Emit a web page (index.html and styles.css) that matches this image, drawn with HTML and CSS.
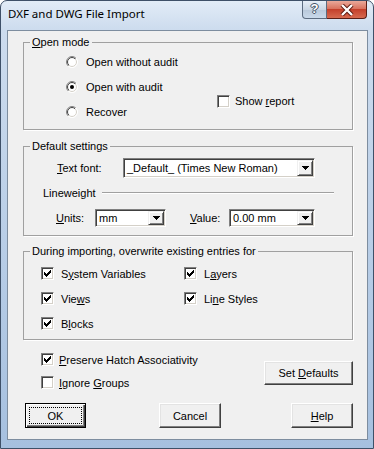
FILE: index.html
```html
<!DOCTYPE html>
<html>
<head>
<meta charset="utf-8">
<title>DXF and DWG File Import</title>
<link rel="stylesheet" href="styles.css">
</head>
<body>
<svg class="defs" width="0" height="0">
  <defs>
    <linearGradient id="rbo" x1="0" y1="0" x2="1" y2="1">
      <stop offset="0" stop-color="#808080"/><stop offset="0.5" stop-color="#808080"/>
      <stop offset="0.5" stop-color="#ffffff"/><stop offset="1" stop-color="#ffffff"/>
    </linearGradient>
    <linearGradient id="rbi" x1="0" y1="0" x2="1" y2="1">
      <stop offset="0" stop-color="#404040"/><stop offset="0.5" stop-color="#404040"/>
      <stop offset="0.5" stop-color="#d4d0c8"/><stop offset="1" stop-color="#d4d0c8"/>
    </linearGradient>
  </defs>
</svg>

<div class="window">
  <div class="titlebar">
    <span class="title">DXF and DWG File Import</span>
    <div class="caption">
      <span class="cap-help">?</span>
      <span class="cap-close">
        <svg width="14" height="12" viewBox="0 0 14 12"><path d="M2 1 L12 11 M12 1 L2 11" stroke="#5a1a10" stroke-width="4.2"/><path d="M2 1 L12 11 M12 1 L2 11" stroke="#fff" stroke-width="2.4"/></svg>
      </span>
    </div>
  </div>

  <div class="client">
    <!-- open mode -->
    <fieldset class="group group-open">
      <legend><u>O</u>pen mode</legend>
      <div class="open-grid">
        <div class="opt">
          <svg class="rb" width="12" height="12" viewBox="0 0 12 12"><circle cx="6" cy="6" r="5.5" fill="#fff" stroke="url(#rbo)"/><circle cx="6" cy="6" r="4.5" fill="none" stroke="url(#rbi)"/></svg>
          <span>Open without audit</span>
        </div>
        <div class="opt">
          <svg class="rb" width="12" height="12" viewBox="0 0 12 12"><circle cx="6" cy="6" r="5.5" fill="#fff" stroke="url(#rbo)"/><circle cx="6" cy="6" r="4.5" fill="none" stroke="url(#rbi)"/><circle cx="6" cy="6" r="2" fill="#000"/></svg>
          <span>Open with audit</span>
        </div>
        <div class="opt">
          <svg class="rb" width="12" height="12" viewBox="0 0 12 12"><circle cx="6" cy="6" r="5.5" fill="#fff" stroke="url(#rbo)"/><circle cx="6" cy="6" r="4.5" fill="none" stroke="url(#rbi)"/></svg>
          <span>Recover</span>
        </div>
        <div class="opt show-report">
          <span class="cb"></span>
          <span>Show <u>r</u>eport</span>
        </div>
      </div>
    </fieldset>

    <!-- default settings -->
    <fieldset class="group group-defaults">
      <legend>Default settings</legend>
      <div class="row row-font">
        <span class="lbl lbl-font"><u>T</u>ext font:</span>
        <div class="combo combo-font">
          <span class="combo-text">_Default_ (Times New Roman)</span>
          <span class="drop"><svg width="7" height="4" viewBox="0 0 7 4"><path d="M0 0h7v1h-1v1h-1v1h-1v1h-1v-1h-1v-1h-1v-1h-1z"/></svg></span>
        </div>
      </div>
      <div class="row row-lw">
        <span class="lbl lbl-lw">Lineweight</span>
        <span class="sep"></span>
      </div>
      <div class="row row-units">
        <span class="lbl lbl-units"><u>U</u>nits:</span>
        <div class="combo combo-units">
          <span class="combo-text">mm</span>
          <span class="drop"><svg width="7" height="4" viewBox="0 0 7 4"><path d="M0 0h7v1h-1v1h-1v1h-1v1h-1v-1h-1v-1h-1v-1h-1z"/></svg></span>
        </div>
        <span class="lbl lbl-value"><u>V</u>alue:</span>
        <div class="combo combo-value">
          <span class="combo-text">0.00 mm</span>
          <span class="drop"><svg width="7" height="4" viewBox="0 0 7 4"><path d="M0 0h7v1h-1v1h-1v1h-1v1h-1v-1h-1v-1h-1v-1h-1z"/></svg></span>
        </div>
      </div>
    </fieldset>

    <!-- overwrite -->
    <fieldset class="group group-over">
      <legend>During importing, overwrite existing entries for</legend>
      <div class="over-grid">
        <div class="opt"><span class="cb on"><svg width="7" height="7" viewBox="0 0 7 7"><path d="M0 2v3h1v1h1v1h1v-1h1v-1h1v-1h1v-1h1v-3h-1v1h-1v1h-1v1h-1v1h-1v-1h-1v-1z"/></svg></span><span>S<u>y</u>stem Variables</span></div>
        <div class="opt"><span class="cb on"><svg width="7" height="7" viewBox="0 0 7 7"><path d="M0 2v3h1v1h1v1h1v-1h1v-1h1v-1h1v-1h1v-3h-1v1h-1v1h-1v1h-1v1h-1v-1h-1v-1z"/></svg></span><span>L<u>a</u>yers</span></div>
        <div class="opt"><span class="cb on"><svg width="7" height="7" viewBox="0 0 7 7"><path d="M0 2v3h1v1h1v1h1v-1h1v-1h1v-1h1v-1h1v-3h-1v1h-1v1h-1v1h-1v1h-1v-1h-1v-1z"/></svg></span><span>Vie<u>w</u>s</span></div>
        <div class="opt"><span class="cb on"><svg width="7" height="7" viewBox="0 0 7 7"><path d="M0 2v3h1v1h1v1h1v-1h1v-1h1v-1h1v-1h1v-3h-1v1h-1v1h-1v1h-1v1h-1v-1h-1v-1z"/></svg></span><span>Li<u>n</u>e Styles</span></div>
        <div class="opt"><span class="cb on"><svg width="7" height="7" viewBox="0 0 7 7"><path d="M0 2v3h1v1h1v1h1v-1h1v-1h1v-1h1v-1h1v-3h-1v1h-1v1h-1v1h-1v1h-1v-1h-1v-1z"/></svg></span><span>B<u>l</u>ocks</span></div>
      </div>
    </fieldset>

    <!-- extra options -->
    <div class="extra">
      <div class="extra-checks">
        <div class="opt"><span class="cb on"><svg width="7" height="7" viewBox="0 0 7 7"><path d="M0 2v3h1v1h1v1h1v-1h1v-1h1v-1h1v-1h1v-3h-1v1h-1v1h-1v1h-1v1h-1v-1h-1v-1z"/></svg></span><span><u>P</u>reserve Hatch Associativity</span></div>
        <div class="opt"><span class="cb"></span><span><u>I</u>gnore <u>G</u>roups</span></div>
      </div>
      <div class="btn btn-defaults"><span>Set <u>D</u>efaults</span></div>
    </div>

    <div class="buttons">
      <div class="btn btn-ok"><span class="focus">OK</span></div>
      <div class="btn btn-cancel"><span>Cancel</span></div>
      <div class="btn btn-help"><span><u>H</u>elp</span></div>
    </div>
  </div>
</div>
</body>
</html>
```

FILE: styles.css
```css
* {
	margin: 0;
	padding: 0;
	box-sizing: border-box;
}
body {
	width: 374px;
	height: 449px;
	overflow: hidden;
	background: #fff;
	font: 11px "Liberation Sans", Arial, sans-serif;
	color: #000;
}
.defs {
	position: absolute;
}
u {
	text-decoration: underline;
	text-underline-offset: 1px;
}

/* window frame */
.window {
	width: 374px;
	height: 449px;
	display: flex;
	flex-direction: column;
	border: 1px solid #3e5068;
	border-radius: 7px 7px 0 0;
	padding: 0 5px 8px 6px;
	background: linear-gradient(180deg, #e2ecf7 0, #cddcee 28px, #b6cce6 60%, #a6c0df 100%);
}
.titlebar {
	height: 29px;
	display: flex;
	flex-shrink: 0;
}
.title {
	font: 11.5px "Noto Sans", "Liberation Sans", sans-serif;
	padding: 5px 0 0 1px;
	color: #000;
}
.caption {
	margin-left: auto;
	margin-right: 1px;
	display: flex;
	height: 18px;
}
.cap-help {
	width: 25px;
	height: 18px;
	border: 1px solid #5c6c80;
	border-top: 0;
	border-radius: 0 0 0 4px;
	background: linear-gradient(180deg, #e6eef7 0, #cad7e5 50%, #b8c8da 51%, #c9d9ea 100%);
	color: #fff;
	font: bold 13px "Liberation Sans", sans-serif;
	text-align: center;
	line-height: 16px;
	text-shadow: 0 0 1px #2a3a4e, 1px 0 0 #4a5a6e, -1px 0 0 #4a5a6e, 0 1px 0 #4a5a6e, 0 -1px 0 #4a5a6e;
}
.cap-close {
	width: 40px;
	height: 18px;
	border: 1px solid #5a1e16;
	border-top: 0;
	border-left: 0;
	border-radius: 0 0 4px 0;
	background: linear-gradient(180deg, #eaa99a 0, #d9735f 45%, #c4402b 50%, #d66a50 100%);
	display: flex;
	align-items: center;
	justify-content: center;
}

/* client area */
.client {
	flex: 1;
	background: #f0f0f0;
	border: 1px solid #7d8d9f;
	padding: 0 14px 0 15px;
}

.group {
	border: 1px solid #a0a0a0;
	box-shadow: 1px 1px 0 #fff;
	min-inline-size: 0;
}
.group legend {
	margin-left: 6px;
	padding: 0 2px;
	line-height: 13px;
}
.group-open {
	margin-top: 5px;
	padding: 0 0 5px 0;
}
.group-defaults {
	margin-top: 10px;
	padding: 5px 18px 8px 0;
}
.group-over {
	margin-top: 9px;
	padding: 3px 0 3px 0;
}

.opt {
	display: flex;
	align-items: center;
	height: 25px;
	white-space: nowrap;
}
.rb {
	flex-shrink: 0;
	margin-right: 8px;
}
.cb {
	width: 13px;
	height: 13px;
	flex-shrink: 0;
	background: #fff;
	border: 1px solid;
	border-color: #808080 #fff #fff #808080;
	box-shadow: inset 1px 1px 0 #404040, inset -1px -1px 0 #d4d0c8;
	display: flex;
	align-items: center;
	justify-content: center;
	margin-right: 7px;
}

.open-grid {
	display: grid;
	grid-template-columns: 151px auto;
	grid-template-rows: 25px 25px 25px;
	padding-left: 42px;
}
.open-grid .opt {
	grid-column: 1;
}
.open-grid .show-report {
	grid-column: 2;
	grid-row: 2 / span 2;
	align-self: center;
	margin-top: 4px;
}
.show-report .cb {
	margin-right: 5px;
}

/* default settings */
.row {
	display: flex;
	align-items: center;
}
.row-font {
	height: 20px;
}
.row-lw {
	height: 30px;
}
.row-units {
	margin-top: 1px;
	height: 18px;
}
.lbl-font {
	margin-left: 33px;
	width: 66px;
}
.lbl-lw {
	margin-left: 19px;
	width: 59px;
}
.sep {
	flex: 1;
	border-top: 1px solid #a0a0a0;
	border-bottom: 1px solid #fff;
}
.lbl-units {
	margin-left: 32px;
	width: 39px;
}
.lbl-value {
	margin-left: 24px;
	width: 39px;
}
.combo {
	height: 100%;
	display: flex;
	background: #fff;
	border: 1px solid;
	border-color: #808080 #fff #fff #808080;
	box-shadow: inset 1px 1px 0 #404040, inset -1px -1px 0 #d4d0c8;
	padding: 1px;
}
.combo-font {
	width: 192px;
}
.combo-units {
	width: 71px;
}
.combo-value {
	width: 86px;
}
.combo-text {
	flex: 1;
	padding-left: 2px;
	line-height: 16px;
	white-space: nowrap;
	overflow: hidden;
}
.combo-units .combo-text,
.combo-value .combo-text {
	line-height: 14px;
}
.drop {
	width: 16px;
	background: #f0f0f0;
	border: 1px solid;
	border-color: #f0f0f0 #404040 #404040 #f0f0f0;
	box-shadow: inset 1px 1px 0 #fff, inset -1px -1px 0 #808080;
	display: flex;
	align-items: center;
	justify-content: center;
}
.drop svg {
	fill: #000;
	shape-rendering: crispEdges;
}

/* overwrite group */
.over-grid {
	display: grid;
	grid-template-columns: 143px auto;
	grid-auto-rows: 25px;
	padding-left: 17px;
}
.cb svg {
	fill: #000;
	shape-rendering: crispEdges;
}

/* bottom */
.extra {
	display: flex;
	align-items: flex-start;
	justify-content: space-between;
	margin-top: 8px;
	padding-left: 18px;
}
.extra .opt {
	height: 23px;
}
.extra .cb {
	margin-right: 5px;
}
.btn {
	background: #f0f0f0;
	border: 1px solid;
	border-color: #fff #404040 #404040 #fff;
	box-shadow: inset -1px -1px 0 #808080, inset 1px 1px 0 #e3e3e3;
	display: flex;
	align-items: center;
	justify-content: center;
	height: 25px;
	width: 62px;
	white-space: nowrap;
}
.btn-defaults {
	width: 89px;
	height: 24px;
	margin-top: 13px;
}
.buttons {
	display: flex;
	justify-content: space-between;
	margin-top: 9px;
	padding-left: 2px;
}
.btn-ok {
	width: 61px;
	border: 1px solid #000;
	box-shadow: inset 1px 1px 0 #fff, inset -1px -1px 0 #404040, inset -2px -2px 0 #808080;
	padding: 3px;
}
.btn-ok .focus {
	flex: 1;
	height: 100%;
	border: 1px dotted #000;
	display: flex;
	align-items: center;
	justify-content: center;
}
.btn-cancel {
	margin-left: 3px;
}
```
